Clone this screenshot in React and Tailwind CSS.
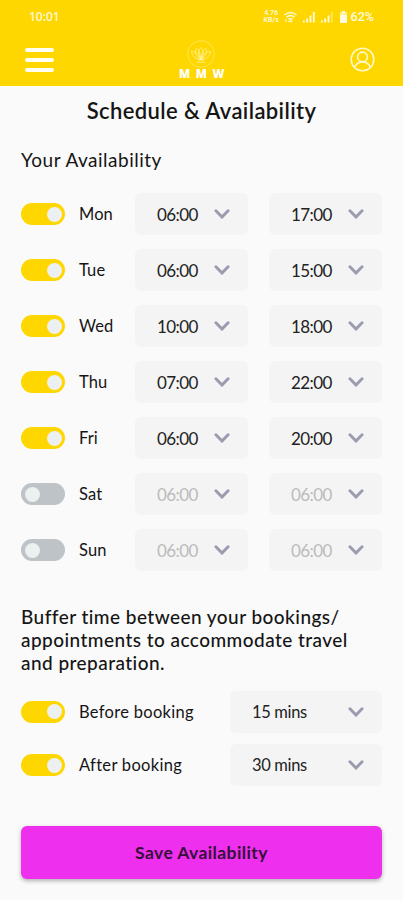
import React from "react";

const days = [
  { name: "Mon", on: true, from: "06:00", to: "17:00" },
  { name: "Tue", on: true, from: "06:00", to: "15:00" },
  { name: "Wed", on: true, from: "10:00", to: "18:00" },
  { name: "Thu", on: true, from: "07:00", to: "22:00" },
  { name: "Fri", on: true, from: "06:00", to: "20:00" },
  { name: "Sat", on: false, from: "06:00", to: "06:00" },
  { name: "Sun", on: false, from: "06:00", to: "06:00" },
];

function Toggle({ on }) {
  return (
    <button
      className={`flex h-[22px] w-11 shrink-0 items-center rounded-full ${
        on ? "justify-end bg-[#ffd700] pr-[3.5px]" : "justify-start bg-[#bdc3c7] pl-[3.5px]"
      }`}
    >
      <span className="size-[15px] rounded-full bg-[#ecf0f1]" />
    </button>
  );
}

function Chevron() {
  return (
    <svg width="16" height="10" viewBox="0 0 16 10" fill="none" stroke="#9b9bb0" strokeWidth="2.9" strokeLinecap="round">
      <path d="M1.9 1.7 L8 8 L14.1 1.7" strokeLinejoin="miter" />
    </svg>
  );
}

function Select({ value, disabled, wide }) {
  return (
    <button
      className={`flex h-[42px] shrink-0 items-center justify-between rounded-[6px] bg-[#f4f4f4] pr-[18px] pl-[22px] ${
        wide ? "w-[152px]" : "w-[113px]"
      } ${disabled ? "text-[#bbbbbb]" : "text-[#222222]"}`}
    >
      <span className={`whitespace-nowrap ${wide ? "text-[16.5px] tracking-[-0.35px]" : "text-[17px] tracking-[-0.6px]"}`}>{value}</span>
      <Chevron />
    </button>
  );
}

function Signal({ weak }) {
  return (
    <svg width="12" height="12" viewBox="0 0 12 12" fill="#fffbe0">
      <rect x="0" y="9.5" width="1.8" height="2" />
      <rect x="3.3" y="7.5" width="1.8" height="4" />
      <rect x="6.6" y="4.5" width="1.8" height="7" />
      <rect x="9.9" y="0.8" width="1.8" height="10.7" opacity={weak ? 0.4 : 1} />
    </svg>
  );
}

function StatusBar() {
  return (
    <div className="flex h-[34px] items-center justify-between pr-[29px] pl-[29px] font-['Roboto',sans-serif] text-[#fffbe0]">
      <span className="font-['Noto_Sans',sans-serif] text-[12px] font-medium">10:01</span>
      <div className="flex items-center">
        <div className="mr-[5px] w-[15px] text-center text-[7px] leading-[7px] font-medium whitespace-nowrap">
          <div>4.76</div>
          <div>KB/s</div>
        </div>
        <svg className="mr-[6px]" width="13" height="12" viewBox="0 0 13 12" fill="none" stroke="#fffbe0" strokeWidth="1.4">
          <path d="M0.5 4 Q6.5 -1.2 12.5 4" />
          <path d="M2.4 6.2 Q6.5 2.8 10.6 6.2" />
          <path d="M4.4 8.4 Q6.5 6.8 8.6 8.4" />
          <path d="M2 8 V11 M4.5 11 L6.5 9.5 L8 11" strokeWidth="1.1" />
        </svg>
        <Signal />
        <span className="w-[6px]" />
        <Signal weak />
        <svg className="mr-[4px] ml-[7px]" width="7" height="12" viewBox="0 0 7 12" fill="#fffbe0">
          <rect x="2" y="0" width="3" height="2" />
          <rect x="0" y="1" width="7" height="11" rx="1" opacity="0.65" />
          <rect x="0" y="4" width="7" height="8" rx="1" />
        </svg>
        <span className="text-[12.5px] leading-none font-medium">62%</span>
      </div>
    </div>
  );
}

function Logo() {
  return (
    <div className="flex flex-col items-center pt-px">
      <svg width="28" height="28" viewBox="0 0 28 28" fill="none" stroke="#fff7b8" strokeWidth="0.65">
        <circle cx="14" cy="14" r="13.3" strokeWidth="0.45" />
        <path d="M14 19.5 C10.5 14 11.5 9.5 14 7.5 C16.5 9.5 17.5 14 14 19.5Z" />
        <path d="M14 19.5 C8.5 16 7.5 12 9.2 8.5 C12 10 13.2 13 14 19.5Z" />
        <path d="M14 19.5 C19.5 16 20.5 12 18.8 8.5 C16 10 14.8 13 14 19.5Z" />
        <path d="M14 19.5 C8 19.5 5 15.5 4.5 11.5 C8.5 11.5 12 14 14 19.5Z" />
        <path d="M14 19.5 C20 19.5 23 15.5 23.5 11.5 C19.5 11.5 16 14 14 19.5Z" />
        <path d="M11 20 H17 M9.5 22.3 H18.5" />
      </svg>
      <span className="pl-[6px] font-['Open_Sans',sans-serif] text-[11.5px] leading-[12px] font-extrabold tracking-[5.6px] text-white">MMW</span>
    </div>
  );
}

function Header() {
  return (
    <header className="h-[86px] bg-[#ffd700]">
      <StatusBar />
      <div className="grid h-[51px] grid-cols-3 items-center pr-[28px] pl-[25px]">
        <button className="flex w-[29px] flex-col gap-[6px]">
          <span className="h-1 rounded-full bg-[#fffef0]" />
          <span className="h-1 rounded-full bg-[#fffef0]" />
          <span className="h-1 rounded-full bg-[#fffef0]" />
        </button>
        <div className="pl-[3px]">
          <Logo />
        </div>
        <svg className="justify-self-end" width="25" height="25" viewBox="0 0 25 25" fill="none" stroke="#fff9c8" strokeWidth="1.6">
          <circle cx="12.5" cy="12.5" r="11.3" />
          <circle cx="12.5" cy="10" r="4.9" />
          <path d="M4.6 20.4 C6 16.8 9 14.9 12.5 14.9 C16 14.9 19 16.8 20.4 20.4" />
        </svg>
      </div>
    </header>
  );
}

export default function App() {
  return (
    <div className="flex h-[900px] w-[403px] flex-col overflow-hidden bg-[#fafafa] font-['Lato',sans-serif] text-[#151515]">
      <Header />
      <main className="flex flex-col px-[21px]">
        <h1 className="mt-[11px] text-center text-[22px] leading-[28px] font-semibold whitespace-nowrap">
          <span className="tracking-[0.38px]">Schedule &amp; Availability</span>
        </h1>
        <h2 className="mt-[23px] text-[19px] leading-6 tracking-[0.5px] whitespace-nowrap">Your Availability</h2>
        <div className="mt-[21.4px] flex flex-col gap-[14px]">
          {days.map((d) => (
            <div key={d.name} className="flex items-center">
              <Toggle on={d.on} />
              <span className="ml-[14px] w-[56px] text-[16.5px] tracking-[0.1px]">{d.name}</span>
              <Select value={d.from} disabled={!d.on} />
              <span className="w-[21px]" />
              <Select value={d.to} disabled={!d.on} />
            </div>
          ))}
        </div>
        <p className="mt-[34px] text-[19px] leading-[23px] font-medium tracking-[0.45px] whitespace-nowrap">
          <span>Buffer time between your bookings/</span>
          <br />
          <span>appointments to accommodate travel</span>
          <br />
          <span>and preparation.</span>
        </p>
        <div className="mt-[16.6px] flex flex-col gap-[11.5px]">
          {[["Before booking", "15 mins"], ["After booking", "30 mins"]].map(([label, value]) => (
            <div key={label} className="flex items-center">
              <Toggle on />
              <span className="ml-[14px] w-[151px] text-[16.5px] tracking-[0.3px] whitespace-nowrap">{label}</span>
              <Select value={value} wide />
            </div>
          ))}
        </div>
        <button className="mt-[39.5px] h-[53.5px] rounded-[6px] bg-[#ee30ee] pt-px text-[17.5px] font-bold tracking-[0.4px] text-[#35103a] shadow-[0_2px_4px_rgba(0,0,0,0.3)]">
          Save Availability
        </button>
      </main>
    </div>
  );
}
